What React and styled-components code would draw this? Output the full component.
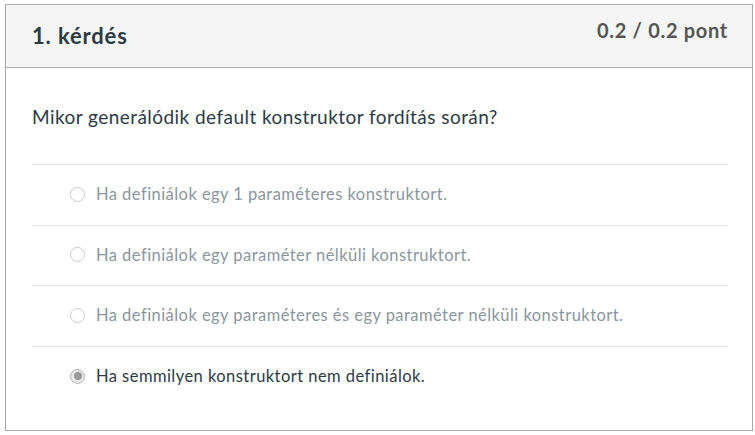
import React from "react";
import styled, { createGlobalStyle } from "styled-components";

const Global = createGlobalStyle`
  html, body { margin: 0; padding: 0; background: #fff; }
  body { font-family: Lato, "Open Sans", sans-serif; }
`;

const Page = styled.div`
  padding: 4px 2px 0 5px;
`;

const Card = styled.div`
  border: 1px solid #a8a8a8;
  box-sizing: border-box;
  height: 427px;
`;

const Header = styled.div`
  background: #f5f5f5;
  border-bottom: 1px solid #a8a8a8;
  height: 63px;
  box-sizing: border-box;
  display: flex;
  justify-content: space-between;
  align-items: flex-start;
  padding: 0 24px 0 26px;
`;

const Title = styled.h2`
  margin: 0;
  padding-top: 17px;
  font-size: 22px;
  font-weight: 700;
  letter-spacing: 0.85px;
  color: #2d3b45;
  line-height: 28px;
`;

const Points = styled.div`
  padding-top: 13px;
  font-size: 20px;
  font-weight: 700;
  letter-spacing: 0.7px;
  color: #555;
  line-height: 24px;
`;

const Body = styled.div`
  padding: 0 24px 0 26px;
`;

const Question = styled.p`
  margin: 0;
  padding: 36px 0 34px;
  font-size: 19px;
  letter-spacing: 0.45px;
  line-height: 26px;
  color: #2d3b45;
`;

const Answer = styled.div`
  border-top: 1px solid #e4e6e8;
  height: 60.6px;
  box-sizing: border-box;
  display: flex;
  align-items: center;
  padding-left: 38px;
  padding-bottom: 1px;
  gap: 11px;
  font-size: 16.5px;
  letter-spacing: 0.45px;
  color: ${(p) => (p.$selected ? "#2d3b45" : "#8b969e")};
`;

const Radio = styled.span`
  width: 15px;
  height: 15px;
  box-sizing: border-box;
  border-radius: 50%;
  border: 1px solid ${(p) => (p.$selected ? "#b5b5b5" : "#c7cdd1")};
  background: ${(p) => (p.$selected ? "#e8e8e8" : "#fff")};
  display: flex;
  align-items: center;
  justify-content: center;
  flex: none;
  &::after {
    content: "";
    display: ${(p) => (p.$selected ? "block" : "none")};
    width: 8px;
    height: 8px;
    border-radius: 50%;
    background: #9a9a9a;
  }
`;

const answers = [
  "Ha definiálok egy 1 paraméteres konstruktort.",
  "Ha definiálok egy paraméter nélküli konstruktort.",
  "Ha definiálok egy paraméteres és egy paraméter nélküli konstruktort.",
  "Ha semmilyen konstruktort nem definiálok.",
];

export default function App() {
  return (
    <Page>
      <Global />
      <Card>
        <Header>
          <Title>1. kérdés</Title>
          <Points>0.2 / 0.2 pont</Points>
        </Header>
        <Body>
          <Question>Mikor generálódik default konstruktor fordítás során?</Question>
          {answers.map((a, i) => (
            <Answer key={i} $selected={i === 3}>
              <Radio $selected={i === 3} />
              <span>{a}</span>
            </Answer>
          ))}
        </Body>
      </Card>
    </Page>
  );
}
